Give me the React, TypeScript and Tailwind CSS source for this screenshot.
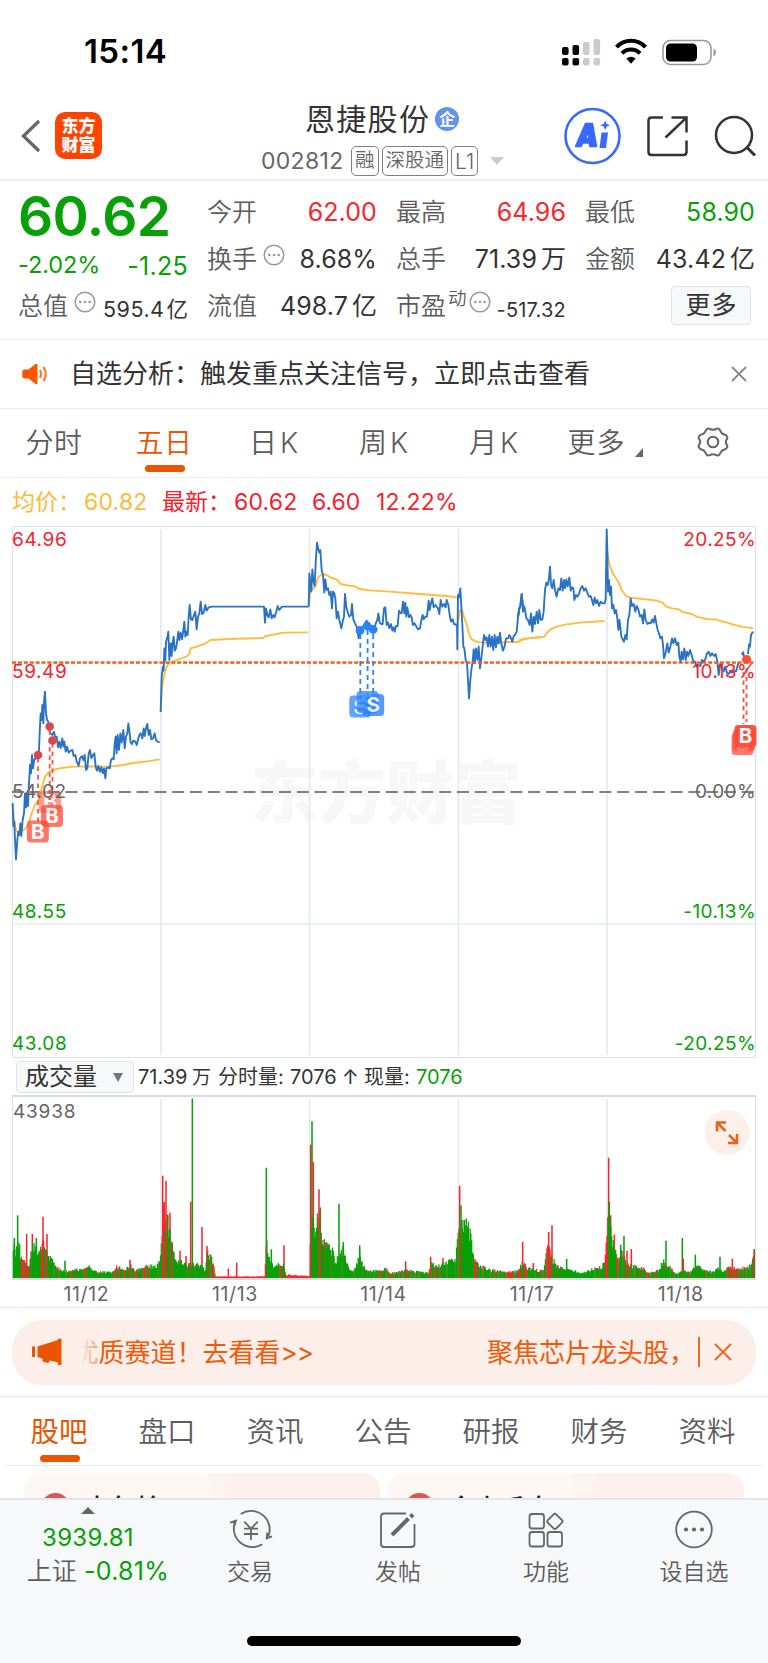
import React from "react";

const FONT = "font-['Inter','Noto_Sans_CJK_SC',sans-serif]";

/* ---------- price series: three drawing panes, three units per pixel ---------- */

const PRICE_A =
  "38,850 40,918 43,905 45,960 48,1018 52,960 55,935 58,945 61,910 64,948 68,900 72,880 75,820 78,862 81,820 84,858 87,790 90,735 93,760 96,705 99,745 103,718 108,715 113,700 117,690 119,640 122,580 125,600 127,555 130,610 132,545 135,515 138,580 141,600 145,605 150,640 157,645 162,635 165,650 170,650 174,682 178,665 182,684 187,655 190,680 193,665 197,695 201,680 206,698 212,692 217,690 221,708 226,705 230,725 236,737 240,715 246,708 250,720 254,705 258,750 262,745 266,700 270,690 274,715 279,705 283,700 287,740 291,752 295,738 300,755 304,742 308,760 312,745 316,775 319,745 324,742 329,745 333,720 337,715 341,718 344,670 347,650 350,700 353,645 357,690 361,640 365,668 370,630 374,685 378,650 382,640 385,610 389,640 392,668 396,672 400,662 406,665 410,675 414,660 418,645 422,640 427,655 431,625 434,648 438,625 442,612 446,645 450,630 454,658 459,655 464,640 468,660 473,665 479,667";

const PRICE_B =
  "482,576 485,470 489,440 491,452 493,385 496,420 498,365 502,352 505,335 508,420 512,370 515,408 518,368 521,350 524,392 528,385 532,360 535,335 538,360 542,338 546,358 549,338 553,305 556,350 560,335 563,345 566,290 569,255 573,298 577,300 582,285 586,275 590,328 594,290 598,280 602,245 606,282 611,278 616,255 620,272 626,262 636,260 792,260 795,308 798,265 802,285 806,292 811,268 815,295 820,285 824,292 829,275 833,258 838,270 846,260 926,260";

const PRICE_C =
  "26,260 28,160 31,190 34,215 37,148 40,180 44,198 47,130 51,68 55,88 58,98 61,90 65,150 69,165 73,218 76,178 80,210 84,205 88,225 92,215 96,265 99,215 103,220 106,235 110,295 114,275 118,300 124,325 129,300 132,290 135,222 139,262 144,280 148,290 153,285 156,252 160,298 165,310 170,320 176,355 180,330 188,322 200,302 204,325 214,318 222,330 228,308 232,300 235,280 239,308 244,312 248,312 252,265 256,262 260,315 264,308 268,325 273,312 277,332 281,322 284,335 288,318 293,318 297,272 301,278 305,280 309,245 313,280 316,248 319,290 322,262 327,292 331,285 335,292 339,315 343,310 348,318 354,328 360,325 364,300 368,285 371,298 376,290 381,290 386,242 389,270 393,250 397,235 401,262 406,255 410,260 414,265 418,282 422,240 427,260 432,252 437,262 440,240 445,255 449,285 453,305 458,298 462,312 471,315 472,388 474,225 477,232 481,205 484,260 487,315 490,380 493,385 497,420 501,430 504,480 507,535 511,480 514,450 518,425 521,388 524,430 528,385 532,420 536,380 540,445 544,415 548,380 552,345 556,360 560,352 564,380 568,345 572,380 576,350 580,390 584,345 588,382 592,350 596,370 600,338 604,372 609,392 614,378 618,355 624,355 628,345 632,352 637,365 641,348 645,345 650,335 654,292 658,265 661,258 665,222 669,255 673,260 677,295 682,275 686,298 690,295 694,320 698,285 702,322 706,265 710,300 714,270 719,298";

const PRICE_D =
  "-1,298 1,245 5,222 9,275 14,262 19,295 24,300 29,315 33,280 37,335 41,290 45,312 50,275 54,310 58,270 62,300 67,298 71,275 75,210 79,188 83,195 87,175 90,140 93,195 97,205 101,180 105,210 110,230 115,205 120,210 124,175 128,212 132,180 135,205 139,178 143,200 148,172 152,212 156,202 160,205 163,240 168,225 172,230 177,222 182,205 187,198 192,212 197,205 202,218 207,230 212,228 216,240 220,255 224,232 228,250 232,240 237,258 242,245 248,250 254,250 257,238 260,28 262,90 264,215 267,180 270,225 273,200 276,265 280,255 284,280 288,270 292,295 295,330 298,300 301,320 304,350 308,358 312,365 316,345 320,358 324,300 328,285 332,235 336,258 341,252 346,275 350,258 355,268 360,290 365,285 369,310 373,268 377,300 382,312 387,308 392,310 397,298 401,308 405,288 409,310 413,330 417,340 421,355 426,350 429,375 432,415 437,398 442,370 446,398 451,380 456,355 460,370 465,355 470,375 475,368 478,410 482,425 485,395 489,418 493,385 497,420 501,395 505,408 510,390 515,405 520,425 525,425 530,440 536,435 541,438 546,420 551,425 556,418 561,400 566,395 571,408 576,400 582,408 587,402 592,425 596,465 601,430 606,440 611,455 616,440 621,458 626,462 631,455 636,458 642,452 648,455";

const AVG_A =
  "38,850 42,900 48,930 55,940 65,935 76,925 85,915 95,880 105,855 115,840 125,805 135,770 145,758 158,750 185,744 220,740 270,739 330,740 370,735 400,729 440,724 479,718";
const AVG_B =
  "482,570 486,500 493,465 500,440 508,428 525,422 545,415 562,408 568,402 572,385 590,380 612,372 632,360 690,357 790,354 795,349 820,344 850,338 924,337";
const AVG_C =
  "27,255 31,215 40,205 48,195 53,175 62,165 70,162 82,166 95,174 110,178 122,192 135,195 165,199 178,207 210,211 270,215 360,222 440,228 471,232";
const AVG_C2 =
  "475,300 480,272 486,270 492,290 500,315 508,345 515,358 530,365 550,368 585,370 620,366 655,366 670,358 700,353 720,351";
const AVG_D =
  "-5,362 0,360 20,355 50,353 73,350 80,340 90,328 110,320 140,313 180,308 254,303";
const AVG_D2 =
  "262,95 268,130 278,160 295,185 305,210 318,228 330,233 370,237 410,242 428,248 438,260 455,265 478,268 485,275 515,282 530,290 560,297 590,299 600,303 620,307 640,314 665,320 700,325";

const BLUE = "#2a72c4";
const GOLD = "#ffbc3d";

function Series({ points, color }: { points: string; color: string }) {
  return <polyline points={points} fill="none" stroke={color} strokeWidth="5.6" strokeLinejoin="round" />;
}

function Badge({ x, y, label, color, opacity = 0.75 }: { x: number; y: number; label: string; color: string; opacity?: number }) {
  return (
    <g opacity={opacity}>
      <rect x={x - 11} y={y - 11} width="22" height="22" rx="4" fill={color} />
      <text x={x} y={y + 7.2} textAnchor="middle" fontSize="20.500" fontWeight="700" fill="#fff">
        {label}
      </text>
    </g>
  );
}

function AxisLabel({ y, left, right, color }: { y: number; left: string; right: string; color: string }) {
  return (
    <g fill={color} fontSize="19">
      <text x="12" y={y} letterSpacing="0.600">{left}</text>
      <text x="756" y={y} textAnchor="end" letterSpacing="0.400">{right}</text>
    </g>
  );
}

const DAY_LINES = [161, 309.5, 458.5, 607];

function PriceChart() {
  return (
    <svg viewBox="0 526 768 532" className="block h-[532px] w-full shrink-0">
      <text x="386" y="818" textAnchor="middle" fontSize="68" fontWeight="900" fill="#f7f7f7">
        东方财富
      </text>
      <path d="M12.5 1057.5V526.5H755.5V1057.5Z" fill="none" stroke="#dfe3e9" strokeWidth="1.2" />
      <path d="M12 661.5H755M12 924H755" stroke="#e6eaf2" strokeWidth="1.6" />
      {DAY_LINES.map((x) => (
        <path key={x} d={`M${x} 529V1055`} stroke="#e4e9f0" strokeWidth="1.6" />
      ))}
      <path d="M12 792H755" stroke="#808080" strokeWidth="2" strokeDasharray="12 5.8" />
      <g transform="translate(0 520) scale(0.33333)">
        <Series points={AVG_A} color={GOLD} />
        <Series points={AVG_B} color={GOLD} />
        <Series points={PRICE_A} color={BLUE} />
        <Series points={PRICE_B} color={BLUE} />
      </g>
      <g transform="translate(300 520) scale(0.33333)">
        <Series points={AVG_C} color={GOLD} />
        <Series points={AVG_C2} color={GOLD} />
        <Series points={PRICE_C.slice(0, PRICE_C.indexOf(" 661,258"))} color={BLUE} />
      </g>
      <g transform="translate(520 520) scale(0.33333)">
        <Series points={AVG_D} color={GOLD} />
        <Series points={AVG_D2} color={GOLD} />
        <Series points="-2,265 1,258" color={BLUE} />
        <Series points={`-6,292 -2,265 1,258 ${PRICE_D.slice(PRICE_D.indexOf("5,222"))}`} color={BLUE} />
        <path d="M648 455L656 425M666 405L669 395L672 410M684 402L687 375L690 378L693 345L697 337L701 337" fill="none" stroke={BLUE} strokeWidth="5.6" />
      </g>
      <g transform="translate(300 520) scale(0.33333)">
        <Series points="654,292 658,265 661,258 665,222 669,255 673,260" color={BLUE} />
      </g>
      <path d="M12 662.7H755" stroke="#f0590f" strokeWidth="2.2" strokeDasharray="4 1.9" />
      <g fill="none" stroke="#ff4f3d" strokeWidth="1.8" strokeDasharray="4.5 4">
        <path d="M38 758V822M49.7 730V800M52.5 743V808" />
        <path d="M743.5 672V724M746.5 668V722" />
      </g>
      <g fill="#d8474b">
        <circle cx="38" cy="755" r="4.3" />
        <circle cx="49.7" cy="726.5" r="4.3" />
        <circle cx="52.5" cy="740.5" r="4.3" />
      </g>
      <circle cx="746.6" cy="659.4" r="4.5" fill="#ff4a36" />
      <Badge x={50} y={802} label="B" color="#ff4a36" opacity={0.55} />
      <Badge x={52} y={816} label="B" color="#ff4a36" />
      <Badge x={37.8} y={831.5} label="B" color="#ff4a36" />
      <Badge x={742.5} y={744} label="B" color="#ff4a36" />
      <Badge x={744} y={740} label="B" color="#ff4a36" />
      <Badge x={745.5} y={736} label="B" color="#ff4a36" opacity={0.95} />
      <g fill="none" stroke="#2b83fb" strokeWidth="1.8" strokeDasharray="5 4">
        <path d="M360.3 634V712M367.6 630V712M373.2 634V712" />
      </g>
      <g fill="#2b83fb">
        <circle cx="360" cy="630.5" r="4.4" />
        <circle cx="367.2" cy="626" r="4.4" />
        <circle cx="373.2" cy="629.5" r="4.4" />
      </g>
      <Badge x={360.3} y={706.5} label="S" color="#2b83fb" />
      <Badge x={367.6} y={702} label="S" color="#2b83fb" />
      <Badge x={373.2} y={705} label="S" color="#2b83fb" opacity={0.8} />
      <AxisLabel y={546} left="64.96" right="20.25%" color="#f5222d" />
      <AxisLabel y={678} left="59.49" right="10.13%" color="#f5222d" />
      <AxisLabel y={798} left="54.02" right="0.00%" color="#666666" />
      <AxisLabel y={917.500} left="48.55" right="-10.13%" color="#07a007" />
      <AxisLabel y={1050} left="43.08" right="-20.25%" color="#07a007" />
    </svg>
  );
}

/* ---------- volume ---------- */

/* [x, height, share of red bars] at three units per pixel */
const ENVELOPE: [number, number, number][] = [
  [38, 60, 0], [42, 100, 0], [48, 80, 0.3], [58, 100, 0.3], [62, 60, 0.9], [75, 45, 0.9], [86, 35, 0.4], [95, 90, 0.4], [102, 100, 0], [110, 85, 0], [120, 80, 0.3], [128, 125, 0.9],
  [135, 100, 0.6], [145, 75, 0.2], [160, 45, 0.3], [180, 25, 0.1], [205, 22, 0.1], [228, 26, 0.1], [250, 26, 0.3], [270, 34, 0.1], [290, 18, 0.1],
  [335, 18, 0.5], [350, 34, 0.6], [375, 28, 0.2], [392, 38, 0.3], [405, 22, 0.1], [425, 32, 0.3], [450, 38, 0.1], [470, 32, 0.1], [480, 60, 0.4],
  [485, 110, 0.9], [490, 220, 0.9], [496, 160, 0.6], [502, 170, 0.3], [510, 150, 0.4], [520, 75, 0.1], [535, 50, 0.2], [560, 42, 0.2], [585, 40, 0.2], [605, 38, 0.4],
  [615, 22, 0.2], [622, 80, 0.5], [634, 65, 0.5], [642, 40, 0.8], [646, 5, 1], [794, 5, 1], [799, 110, 0], [806, 65, 0], [820, 35, 0], [838, 42, 0.4],
  [852, 45, 0.6], [858, 10, 1], [928, 6, 1], [932, 160, 0.7], [940, 180, 0.3], [948, 130, 0], [956, 220, 0.7], [962, 150, 0], [970, 108, 0.1], [985, 92, 0.1],
  [998, 85, 0.1], [1006, 45, 0], [1018, 75, 0.2], [1030, 85, 0.3], [1040, 45, 0], [1052, 22, 0.2], [1068, 30, 0.2], [1079, 90, 0.1], [1088, 35, 0.2], [1105, 22, 0.3],
  [1140, 22, 0.2], [1156, 32, 0.7], [1170, 14, 0.5], [1220, 24, 0.2], [1260, 18, 0.1], [1285, 16, 0.5], [1294, 45, 0.4], [1312, 35, 0.3], [1330, 50, 0.2], [1350, 50, 0.1],
  [1368, 60, 0.3], [1374, 140, 0.3], [1383, 190, 0.2], [1392, 165, 0], [1400, 165, 0.1], [1412, 135, 0.1], [1418, 70, 0.9], [1430, 45, 0.2], [1455, 32, 0.2], [1475, 24, 0.3],
  [1520, 18, 0.6], [1555, 22, 0.5], [1568, 48, 0.6], [1582, 30, 0.2], [1610, 24, 0.4], [1632, 24, 0.5], [1640, 90, 0.9], [1648, 90, 0.9], [1658, 55, 0], [1672, 40, 0.2],
  [1690, 28, 0.1], [1720, 24, 0.1], [1745, 14, 0.1], [1780, 28, 0.1], [1806, 34, 0.1], [1816, 70, 0.8], [1824, 210, 0.6], [1832, 140, 0.2], [1842, 90, 0.3], [1855, 55, 0.2],
  [1866, 85, 0.2], [1880, 45, 0.4], [1900, 36, 0.3], [1930, 30, 0.3], [1950, 14, 0.3], [1975, 25, 0.1], [1990, 50, 0.1], [2002, 40, 0.5], [2030, 12, 0.1], [2050, 22, 0.2],
  [2070, 16, 0.2], [2090, 40, 0.1], [2110, 26, 0.2], [2140, 18, 0.2], [2155, 30, 0.2], [2170, 18, 0.4], [2190, 35, 0.7], [2215, 28, 0.3], [2240, 32, 0.3], [2255, 40, 0.4], [2261, 75, 0.4],
  [2264, 80, 0],
];

const RED = "#f9252b";
const GREEN = "#07a007";

/* [x, height, colour] */
const SPIKES: [number, number, string][] = [
  [43, 120, GREEN], [53, 188, GREEN], [80, 132, RED], [97, 132, RED], [109, 120, GREEN], [129, 184, RED], [141, 132, RED], [151, 66, GREEN], [195, 52, GREEN], [390, 55, RED],
  [488, 307, RED], [493, 228, RED], [498, 292, RED], [503, 188, GREEN], [510, 196, RED], [540, 82, RED], [558, 66, RED], [572, 229, RED], [577, 539, GREEN], [606, 153, RED],
  [621, 96, RED], [685, 28, RED], [710, 46, RED], [799, 331, GREEN], [814, 86, GREEN], [852, 98, RED], [932, 400, RED], [936, 470, GREEN], [940, 348, RED], [957, 266, RED],
  [961, 212, GREEN], [979, 108, RED], [1017, 223, GREEN], [1030, 108, GREEN], [1079, 98, GREEN], [1217, 50, RED], [1292, 64, RED], [1329, 60, RED], [1379, 276, RED],
  [1383, 218, GREEN], [1399, 178, GREEN], [1568, 108, RED], [1600, 45, RED], [1646, 138, RED], [1656, 158, RED], [1700, 57, GREEN], [1826, 361, RED], [1828, 228, GREEN], [1832, 188, RED],
  [1843, 130, RED], [1862, 100, GREEN], [1872, 126, GREEN], [1881, 82, RED], [1894, 87, RED], [1998, 112, GREEN], [2047, 120, GREEN], [2050, 58, RED], [2086, 70, GREEN],
  [2160, 64, GREEN], [2197, 58, RED], [2263, 87, GREEN],
];

function noise(i: number) {
  const s = Math.sin(i * 127.1 + 11.7) * 43758.5453;
  return s - Math.floor(s);
}

function volumePaths() {
  let red = "";
  let green = "";
  let k = 0;
  for (let i = 0, x = 40; x <= 2264; x += 2.4, i++) {
    while (k < ENVELOPE.length - 2 && ENVELOPE[k + 1][0] < x) k++;
    const [x0, h0, r0] = ENVELOPE[k];
    const [x1, h1] = ENVELOPE[k + 1];
    const t = Math.min(1, Math.max(0, (x - x0) / (x1 - x0)));
    const h = (h0 + (h1 - h0) * t) * (0.75 + 0.4 * noise(i));
    const seg = `M${x.toFixed(1)} 0v-${Math.max(4, h).toFixed(1)}`;
    if (noise(i + 5000) < r0) red += seg;
    else green += seg;
  }
  return { red, green };
}

const VOLUME = volumePaths();

function VolumeChart() {
  return (
    <svg viewBox="0 1095 768 185" className="block h-[185px] w-full shrink-0">
      <path d="M12.5 1095V1279M755.5 1095V1279" stroke="#dfe3e9" strokeWidth="1.2" />
      <path d="M12 1096H756M12 1279H756" stroke="#d9dce1" strokeWidth="1.8" />
      {DAY_LINES.map((x) => (
        <path key={x} d={`M${x} 1099V1278`} stroke="#e4e9f0" strokeWidth="1.6" />
      ))}
      <g transform="translate(0 1278) scale(0.33333)" fill="none" strokeWidth="3.600">
        {SPIKES.map(([x, h, c]) => (
          <path key={x} d={`M${x} 0v-${h}`} stroke={c} strokeWidth="4.600" />
        ))}
        <path d={VOLUME.red} stroke={RED} />
        <path d={VOLUME.green} stroke={GREEN} />
      </g>
      <text x="13" y="1117.500" fontSize="19" fill="#666" letterSpacing="0.8">43938</text>
      <circle cx="727" cy="1132.5" r="22.5" fill="#fdf0ea" />
      <g fill="none" stroke="#f06010" strokeWidth="2.500">
        <path d="M726 1122.5H717V1131.5M717 1122.5L725.5 1131" />
        <path d="M728 1143H737V1134M737 1143L729 1135" />
      </g>
    </svg>
  );
}

/* ---------- header ---------- */

function StatusBar() {
  return (
    <div className="flex h-[96px] shrink-0 items-center pt-[7px]">
      <span className="ml-[84px] w-[90px] text-[33px] font-semibold leading-none tracking-[0.400px] text-black">15:14</span>
      <svg viewBox="0 0 160 32" className="ml-auto mr-[50px] h-[32px] w-[160px]">
        <g fill="#000">
          <rect x="4" y="11" width="6.6" height="8" rx="2" />
          <rect x="14.5" y="9" width="6.6" height="10" rx="2" />
          <rect x="4" y="22" width="6.6" height="7.5" rx="2" />
          <rect x="14.5" y="22" width="6.6" height="7.5" rx="2" />
        </g>
        <g fill="#cbcbcb">
          <rect x="25" y="6" width="6.6" height="13" rx="2" />
          <rect x="35.5" y="3" width="6.6" height="16" rx="2" />
          <rect x="25" y="22" width="6.6" height="7.5" rx="2" />
          <rect x="35.5" y="22" width="6.6" height="7.5" rx="2" />
        </g>
        <g fill="none" stroke="#000" strokeWidth="4">
          <path d="M58.500 11.200A19.500 19.500 0 0 1 87.500 11.200" />
          <path d="M64 17.400A12.500 12.500 0 0 1 82 17.400" />
        </g>
        <path d="M68.300 22.500Q73 19 77.700 22.500L73 27.800Z" fill="#000" />
        <rect x="105" y="4.500" width="48" height="24" rx="7.500" fill="none" stroke="#999" strokeWidth="1.600" />
        <rect x="108" y="7.500" width="31" height="18" rx="4.500" fill="#000" />
        <path d="M155.500 12.500Q158 13.500 158 16.500T155.500 20.500Z" fill="#999" />
      </svg>
    </div>
  );
}

function Tag({ children }: { children: React.ReactNode }) {
  return (
    <span className="flex h-[30px] items-center rounded-[5px] border border-[#808080] px-[3px] text-[19.500px] font-[350] leading-none text-[#666]">
      {children}
    </span>
  );
}

function Header() {
  return (
    <div className="flex h-[85px] shrink-0 border-b-2 border-[#ececec]">
      <div className="flex w-[258px] items-start pl-[20px] pt-[16px]">
        <svg viewBox="0 0 22 36" className="mt-[6px] h-[36px] w-[22px]">
          <path d="M19 3L3.500 18L19 33" fill="none" stroke="#666" strokeWidth="3.300" />
        </svg>
        <div className="ml-[13px] flex h-[47px] w-[47px] flex-col items-center justify-center rounded-[10px] bg-[#ff4400] text-[17px] font-black leading-[18.500px] text-white">
          <span>东方</span>
          <span>财富</span>
        </div>
      </div>
      <div className="flex w-[248px] flex-col">
        <div className="mt-[4px] flex h-[38px] items-center pl-[47px]">
          <span className="text-[30px] leading-none tracking-[1.300px] text-[#333]">恩捷股份</span>
          <span className="ml-[5px] flex h-[24px] w-[24px] items-center justify-center rounded-full bg-[#6592ea] text-[16px] font-bold leading-none text-white">
            企
          </span>
        </div>
        <div className="mt-[7px] flex h-[32px] items-center pl-[3px]">
          <span className="w-[90px] text-[23px] leading-none tracking-[0.300px] text-[#666]">002812</span>
          <div className="flex gap-[3px]">
            <Tag>融</Tag>
            <Tag>深股通</Tag>
            <Tag>
              <span className="text-[21px]">L1</span>
            </Tag>
          </div>
          <svg viewBox="0 0 14 8" className="ml-[12px] h-[8px] w-[14px]">
            <path d="M0 0H14L7 8Z" fill="#ccc" />
          </svg>
        </div>
      </div>
      <svg viewBox="0 0 204 60" className="ml-auto mr-[8px] mt-[9px] h-[60px] w-[204px]">
        <circle cx="36.500" cy="31" r="27" fill="none" stroke="#3769ff" strokeWidth="2.600" />
        <path
          fill="#3769ff"
          stroke="#3769ff"
          strokeWidth="1.500"
          strokeLinejoin="round"
          fillRule="evenodd"
          d="M29.500 18.500H36.500L40.500 41.500H33.800L33.400 38H26.800L25 41.500H19.500ZM32.300 26.500L29.300 33.500H33Z"
        />
        <path fill="#3769ff" d="M45.500 27.500H52L50 43H43.500ZM49.200 15.500L50.800 19L54 20.300L50.800 21.600L49.200 25L47.600 21.600L44 20.300L47.600 19Z" />
        <g fill="none" stroke="#333" strokeWidth="2.500">
          <path d="M107 12.600H95.500Q92.500 12.600 92.500 15.600V47Q92.500 50 95.500 50H127.500Q130.500 50 130.500 47V35.500" />
          <path d="M115.500 12.600H130.500V27.500M130.500 12.600L109.500 32.500" />
          <circle cx="178" cy="30" r="18" />
          <path d="M190.500 42L199 50.500" strokeWidth="3" />
        </g>
      </svg>
    </div>
  );
}

/* ---------- quote ---------- */

function Dots({ className }: { className: string }) {
  return (
    <svg viewBox="0 0 22 22" className={className}>
      <circle cx="11" cy="11" r="9.800" fill="none" stroke="#999" strokeWidth="1.500" />
      <g fill="#999">
        <circle cx="6.300" cy="11" r="1.350" />
        <circle cx="11" cy="11" r="1.350" />
        <circle cx="15.700" cy="11" r="1.350" />
      </g>
    </svg>
  );
}

type CellProps = { label: string; value: string; unit?: string; color?: string; dots?: boolean };

function Cell({ label, value, unit, color = "text-[#333]", dots = false }: CellProps) {
  return (
    <div className="flex h-[47px] items-center whitespace-nowrap leading-none">
      <span className="text-[25px] font-[350] text-[#5c5c5c]">{label}</span>
      {dots && <Dots className="mb-[9px] ml-[6px] h-[22px] w-[22px]" />}
      <span className={`ml-auto text-[25px] tracking-[0.100px] ${color}`}>{value}</span>
      {unit && <span className={`ml-[4px] text-[25px] ${color}`}>{unit}</span>}
    </div>
  );
}

function Quote() {
  return (
    <div className="flex h-[159px] shrink-0 gap-[19px] border-b border-[#eeeeee] pl-[18px] pr-[13px] pt-[8px]">
      <div className="w-[170px]">
        <div className="flex h-[54px] items-center text-[55px] font-semibold leading-none tracking-[-0.600px] text-[#07a007]">60.62</div>
        <div className="flex h-[40px] items-center justify-between whitespace-nowrap pt-[4px] leading-none text-[#07a007]">
          <span className="text-[23.500px] tracking-[-0.100px]">-2.02%</span>
          <span className="pt-[2px] text-[25px] tracking-[0.300px]">-1.25</span>
        </div>
        <div className="flex h-[47px] items-center whitespace-nowrap leading-none">
          <span className="text-[25px] font-[350] text-[#5c5c5c]">总值</span>
          <Dots className="mb-[9px] ml-[6px] h-[22px] w-[22px]" />
          <span className="ml-auto pt-[6px] text-[21.500px] tracking-[0.500px] text-[#333]">595.4</span>
          <span className="ml-[2px] pt-[6px] text-[21.500px] text-[#333]">亿</span>
        </div>
      </div>
      <div className="w-[170px]">
        <Cell label="今开" value="62.00" color="text-[#f9252b]" />
        <Cell label="换手" value="8.68%" dots />
        <Cell label="流值" value="498.7" unit="亿" />
      </div>
      <div className="w-[170px]">
        <Cell label="最高" value="64.96" color="text-[#f9252b]" />
        <Cell label="总手" value="71.39" unit="万" />
        <div className="flex h-[47px] items-center whitespace-nowrap leading-none">
          <span className="text-[25px] font-[350] text-[#5c5c5c]">市盈</span>
          <span className="mb-[16px] ml-[2px] text-[18.500px] font-[350] text-[#5c5c5c]">动</span>
          <Dots className="mb-[9px] ml-[2px] h-[22px] w-[22px]" />
          <span className="ml-auto pt-[7px] text-[20px] tracking-[0.200px] text-[#333]">-517.32</span>
        </div>
      </div>
      <div className="w-[170px]">
        <Cell label="最低" value="58.90" color="text-[#07a007]" />
        <Cell label="金额" value="43.42" unit="亿" />
        <div className="flex h-[47px] items-center justify-end pb-[3px] pr-[4px]">
          <div className="flex h-[39px] w-[80px] items-center justify-center rounded-[4px] border-[1.500px] border-[#dfe3e9] bg-[#f7f8fa] pl-px text-[25px] leading-none tracking-[1px] text-[#333]">
            更多
          </div>
        </div>
      </div>
    </div>
  );
}

function Notice() {
  return (
    <div className="flex h-[69px] shrink-0 items-center border-b border-[#eeeeee] pl-[22px] pr-[21px]">
      <svg viewBox="0 0 26 22" className="h-[22px] w-[26px]">
        <path d="M2.500 6.500H6.500L13.500 1Q15.500 0 15.500 2.500V19.500Q15.500 22 13.500 21L6.500 15.500H2.500Q0.300 15.500 0.300 13.500V8.500Q0.300 6.500 2.500 6.500Z" fill="#ff5500" />
        <path d="M18 7Q20 11 18 15M21.500 4Q26 11 21.500 18" fill="none" stroke="#ff7733" strokeWidth="2.200" />
      </svg>
      <span className="ml-[22px] whitespace-nowrap text-[26px] leading-none text-[#333]">自选分析：触发重点关注信号，立即点击查看</span>
      <svg viewBox="0 0 16 16" className="ml-auto h-[16px] w-[16px]">
        <path d="M1 1L15 15M15 1L1 15" stroke="#888" strokeWidth="1.800" />
      </svg>
    </div>
  );
}

const PERIODS = ["分时", "五日", "日K", "周K", "月K"];

function PeriodTabs() {
  return (
    <div className="flex h-[69px] shrink-0 border-b border-[#eeeeee] text-[28px] font-[350] leading-none text-[#5c5c5c]">
      {PERIODS.map((p, i) => (
        <div key={p} className={`flex w-[110px] flex-col items-center pt-[20px] ${i === 1 ? "text-[#ea5504]" : ""}`}>
          <span className={i > 1 ? "tracking-[3px]" : "pr-[2px] tracking-[0.600px]"}>{p}</span>
          {i === 1 && <span className="mt-[8px] h-[7px] w-[40px] shrink-0 rounded-full bg-[#ea5504]" />}
        </div>
      ))}
      <div className="flex w-[110px] justify-center pt-[20px]">
        <span className="tracking-[1px]">更多</span>
        <svg viewBox="0 0 8 9" className="ml-[9px] mt-[19px] h-[9px] w-[8px]">
          <path d="M8 0V9H0Z" fill="#666" />
        </svg>
      </div>
      <div className="flex w-[106px] justify-center pt-[18px]">
        <svg viewBox="0 0 32 30" className="h-[30px] w-[32px]">
          <path
            d="M9.500 2.500Q11 .8 13 2Q16 3.600 19 2Q21 .8 22.500 2.500L24 5Q25 7.300 27.500 7.500Q29 7.700 30 9.500Q31 11 29.300 13Q28.300 15 29.300 17Q31 19 30 20.500Q29 22.300 27.500 22.500Q25 23 24 25L22.500 27.500Q21 29.200 19 28Q16 26.400 13 28Q11 29.200 9.500 27.500L8 25Q7 23 4.500 22.500Q3 22.300 2 20.500Q1 19 2.700 17Q3.700 15 2.700 13Q1 11 2 9.500Q3 7.700 4.500 7.500Q7 7 8 5Z"
            fill="none"
            stroke="#666"
            strokeWidth="2"
          />
          <circle cx="16" cy="15" r="5.300" fill="none" stroke="#666" strokeWidth="2" />
        </svg>
      </div>
    </div>
  );
}

function Legend() {
  return (
    <div className="flex h-[48px] shrink-0 items-center whitespace-nowrap pl-[12px] pt-px text-[23px] leading-none text-[#f5222d]">
      <span className="w-[72px] text-[#ffb93a]">均价：</span>
      <span className="w-[78px] tracking-[0.200px] text-[#ffb93a]">60.82</span>
      <span className="w-[72px]">最新：</span>
      <span className="w-[78px] tracking-[0.200px]">60.62</span>
      <span className="w-[64px]">6.60</span>
      <span className="tracking-[0.200px]">12.22%</span>
    </div>
  );
}

function VolumeHeader() {
  return (
    <div className="flex h-[37px] shrink-0 items-center whitespace-nowrap pl-[16px] pt-px text-[20px] leading-none text-[#333]">
      <div className="flex h-[32px] w-[118px] items-center justify-between rounded-[4px] border-[1.500px] border-[#dfe3e9] bg-[#f7f8fa] pl-[8px] pr-[10px] text-[24px]">
        <span>成交量</span>
        <svg viewBox="0 0 10 9" className="h-[9px] w-[10px]">
          <path d="M0 0H10L5 9Z" fill="#777" />
        </svg>
      </div>
      <span className="ml-[4px] w-[54px]">71.39</span>
      <span className="w-[26px] text-[19px]">万</span>
      <span className="w-[72px]">分时量:</span>
      <span className="w-[52px]">7076</span>
      <span className="w-[22px]">↑</span>
      <span className="w-[52px]">现量:</span>
      <span className="text-[#07a007]">7076</span>
    </div>
  );
}

const DATES = ["11/12", "11/13", "11/14", "11/17", "11/18"];

function DateAxis() {
  return (
    <div className="flex h-[28px] shrink-0 items-center border-b border-[#e3e5ea] pl-[12px] pr-[13px] pt-[2px] text-[19.500px] leading-none tracking-[0.600px] text-[#666]">
      {DATES.map((d) => (
        <span key={d} className="flex-1 text-center">{d}</span>
      ))}
    </div>
  );
}

function Promo() {
  return (
    <div className="flex h-[89px] shrink-0 items-center border-b border-[#e3e5ee] px-[12px]">
      <div className="flex h-[65px] w-full items-center overflow-hidden whitespace-nowrap rounded-[30px] bg-[#fceee8] pl-[20px] pr-[24px] text-[26px] leading-none text-[#f05a0a]">
        <svg viewBox="0 0 30 28" className="h-[28px] w-[30px]">
          <path d="M0 8.500H3V19H0ZM5.500 8.500L26 2V.8H29.500V27H26V24.500L18 22.500L16 25L10.500 23.500V20.500L5.500 19Z" fill="#ea5504" />
        </svg>
        <div className="relative ml-[19px] flex w-[232px] justify-end overflow-hidden pt-[2px]">
          <span>
            优质赛道！去看看<span className="tracking-[-1px]">&gt;&gt;</span>
          </span>
          <span className="absolute left-0 top-0 h-full w-[18px] bg-gradient-to-r from-[#fceee8] to-[#fceee8]/40" />
        </div>
        <span className="ml-auto w-[211px] pt-[2px]">聚焦芯片龙头股，</span>
        <span className="h-[30px] w-[2px] bg-[#f06a20]" />
        <svg viewBox="0 0 18 18" className="ml-[14px] h-[18px] w-[18px]">
          <path d="M1 1L17 17M17 1L1 17" stroke="#ee6a26" strokeWidth="2" />
        </svg>
      </div>
    </div>
  );
}

const SECTIONS = ["股吧", "盘口", "资讯", "公告", "研报", "财务", "资料"];

function SectionTabs() {
  return (
    <div className="mx-[6px] flex h-[69px] shrink-0 border-b border-[#e6e8ec] text-[28.500px] font-[350] leading-none text-[#5c5c5c]">
      {SECTIONS.map((s, i) => (
        <div key={s} className={`flex w-[108px] shrink-0 flex-col items-center pt-[21px] ${i === 0 ? "font-normal text-[#ea5504]" : ""}`}>
          <span className="pr-[2px]">{s}</span>
          {i === 0 && <span className="mt-[8px] h-[7px] w-[40px] shrink-0 rounded-full bg-[#ea5504]" />}
        </div>
      ))}
    </div>
  );
}

function Cards() {
  return (
    <div className="flex h-[32px] shrink-0 gap-[8px] overflow-hidden px-[24px] pt-[7px]">
      {["大包抢", "今山禾自"].map((t) => (
        <div key={t} className="flex h-[90px] flex-1 items-start rounded-[16px] bg-gradient-to-r from-[#fef7f3] from-50% to-[#fdf1ee] to-60% pl-[17px] pt-[20px]">
          <span className="h-[29px] w-[29px] rounded-full bg-[#dc5551]" />
          <span className="ml-[14px] mt-[3px] text-[26px] font-medium leading-none text-[#222]">{t}</span>
        </div>
      ))}
    </div>
  );
}

function NavItem({ label, children }: { label: string; children: React.ReactNode }) {
  return (
    <div className="flex w-[148px] flex-col items-center pt-[10px]">
      <svg viewBox="0 0 44 40" className="h-[40px] w-[44px] overflow-visible" fill="none" stroke="#666" strokeWidth="1.800">
        {children}
      </svg>
      <span className="mt-[11px] text-[23px] font-[350] leading-none text-[#5c5c5c]">{label}</span>
    </div>
  );
}

function BottomBar() {
  return (
    <div className="flex h-[165px] shrink-0 flex-col border-t-2 border-[#e3e5e8] bg-[#f7f8fa]">
      <div className="flex h-[136px]">
        <div className="flex w-[176px] flex-col items-center whitespace-nowrap pt-[7px] leading-none text-[#07a007]">
          <svg viewBox="0 0 14 7" className="h-[7px] w-[14px]">
            <path d="M7 0L14 7H0Z" fill="#666" />
          </svg>
          <span className="mt-[12px] h-[25px] text-[24px] tracking-[0.300px]">3939.81</span>
          <span className="mt-[8px] pl-[20px] text-[25px]">
            <span className="font-[350] text-[#5c5c5c]">上证</span> <span className="tracking-[0.300px]">-0.81%</span>
          </span>
        </div>
        <NavItem label="交易">
          <path d="M12.700 4A18.700 18.700 0 0 1 40.300 26.700M34.300 34.300A18.700 18.700 0 0 1 7.300 11M2 12.600L8 10.700L6.300 16M39.300 22.700L38.700 28.400L44 26.300" />
          <path d="M16.300 11.700L23 18.700L29.700 11.700M16 18.700H30M16 24H30M23 18.700V30" />
        </NavItem>
        <NavItem label="发帖">
          <path d="M30 3.500H8Q5 3.500 5 6.500V34Q5 37 8 37H35Q38.500 37 38.500 34V14" />
          <path d="M16 25L32.500 8.500M34.500 7L37 4.500" strokeWidth="4" />
        </NavItem>
        <NavItem label="功能">
          <rect x="5.500" y="4" width="14.500" height="14.500" rx="2.500" />
          <rect x="5.500" y="22" width="14.500" height="14.500" rx="2.500" />
          <rect x="23.500" y="22" width="14.500" height="14.500" rx="2.500" />
          <rect x="25" y="5.500" width="11.800" height="11.800" rx="1.800" transform="rotate(45 30.900 11.400)" />
        </NavItem>
        <NavItem label="设自选">
          <circle cx="22" cy="19.500" r="17.800" />
          <g fill="#666" stroke="none">
            <circle cx="14" cy="19.500" r="2.100" />
            <circle cx="22" cy="19.500" r="2.100" />
            <circle cx="30" cy="19.500" r="2.100" />
          </g>
        </NavItem>
      </div>
      <div className="mx-auto h-[10px] w-[274px] rounded-full bg-black" />
    </div>
  );
}

export default function App() {
  return (
    <div className={`${FONT} flex h-[1663px] w-[768px] flex-col overflow-hidden bg-white`}>
      <StatusBar />
      <Header />
      <Quote />
      <Notice />
      <PeriodTabs />
      <Legend />
      <PriceChart />
      <VolumeHeader />
      <VolumeChart />
      <DateAxis />
      <Promo />
      <SectionTabs />
      <Cards />
      <BottomBar />
    </div>
  );
}
